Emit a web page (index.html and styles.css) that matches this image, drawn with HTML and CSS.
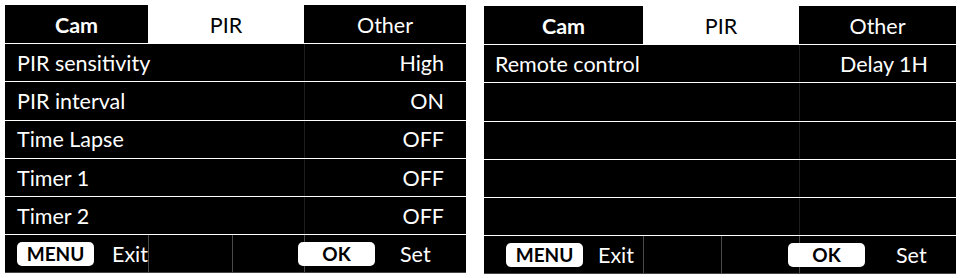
FILE: index.html
```html
<!DOCTYPE html>
<html lang="en">
<head>
<meta charset="UTF-8">
<meta name="viewport" content="width=device-width, initial-scale=1.0">
<title>Camera menu - PIR</title>
<link rel="stylesheet" href="styles.css">
</head>
<body>
<div class="screens">

  <!-- page 1 of the PIR tab -->
  <div class="panel p1">
    <div class="tabs">
      <div class="tab cam">Cam</div>
      <div class="tab on">PIR</div>
      <div class="tab">Other</div>
    </div>
    <div class="row"><span>PIR sensitivity</span><span class="val">High</span></div>
    <div class="row"><span>PIR interval</span><span class="val">ON</span></div>
    <div class="row"><span>Time Lapse</span><span class="val">OFF</span></div>
    <div class="row"><span>Timer 1</span><span class="val">OFF</span></div>
    <div class="row"><span>Timer 2</span><span class="val">OFF</span></div>
    <div class="foot">
      <div class="keys"><span class="btn">MENU</span><span>Exit</span></div>
      <div class="keys right"><span class="btn">OK</span><span>Set</span></div>
    </div>
  </div>

  <!-- page 2 of the PIR tab -->
  <div class="panel p2">
    <div class="tabs">
      <div class="tab cam">Cam</div>
      <div class="tab on">PIR</div>
      <div class="tab">Other</div>
    </div>
    <div class="row"><span>Remote control</span><span class="val">Delay 1H</span></div>
    <div class="row"></div>
    <div class="row"></div>
    <div class="row"></div>
    <div class="row"></div>
    <div class="foot">
      <div class="keys"><span class="btn">MENU</span><span>Exit</span></div>
      <div class="keys right"><span class="btn">OK</span><span>Set</span></div>
    </div>
  </div>

</div>
</body>
</html>
```

FILE: styles.css
```css
*{box-sizing:border-box;margin:0;padding:0}
body{background:#fff;font-family:Lato, "Liberation Sans", sans-serif;color:#fff}
.screens{display:flex;align-items:flex-start;gap:18px;padding:5px 0 0 5px}

.panel{background:#000;display:flex;flex-direction:column;font-size:21.5px}
.p1{width:461px;--c1:143px;--c2:156px;--mid:227px;--pad:12px;--padr:22px;--kpad:12px;--gap:18px;--ok:293px;--setgap:25px}
.p2{width:472px;margin-top:1px;--c1:159px;--c2:156px;--mid:237px;--pad:11px;--padr:28px;--kpad:22px;--gap:15px;--ok:304px;--setgap:31px}

.tabs{display:grid;grid-template-columns:var(--c1) var(--c2) 1fr;height:39px;border-bottom:1px solid #fff}
.tab{display:flex;align-items:center;justify-content:center;padding-top:1px}
.tab.cam{font-weight:bold}
.tab.on{background:#fff;color:#000}

.row{height:38.3px;display:flex;align-items:center;justify-content:space-between;padding:0 var(--padr) 0 var(--pad);border-bottom:1px solid #fff;
  background:linear-gradient(#1e1e1e,#1e1e1e) no-repeat calc(var(--c1) + var(--c2)) 0/1px 100%}

.foot{height:38px;display:grid;grid-template-columns:var(--ok) 1fr;align-items:center;
  background:
    linear-gradient(#4a4a4a,#4a4a4a) no-repeat var(--c1) 0/1px 100%,
    linear-gradient(#4a4a4a,#4a4a4a) no-repeat var(--mid) 0/1px 100%,
    linear-gradient(#4a4a4a,#4a4a4a) no-repeat calc(var(--c1) + var(--c2)) 0/1px 100%;
  border-bottom:1px solid #444}
.keys{display:flex;align-items:center;gap:var(--gap);padding-left:var(--kpad)}
.keys.right{padding-left:0;gap:var(--setgap)}
.btn{width:77px;height:24px;background:#fff;color:#000;border-radius:5px;font-size:19px;font-weight:bold;display:flex;align-items:center;justify-content:center}
```
